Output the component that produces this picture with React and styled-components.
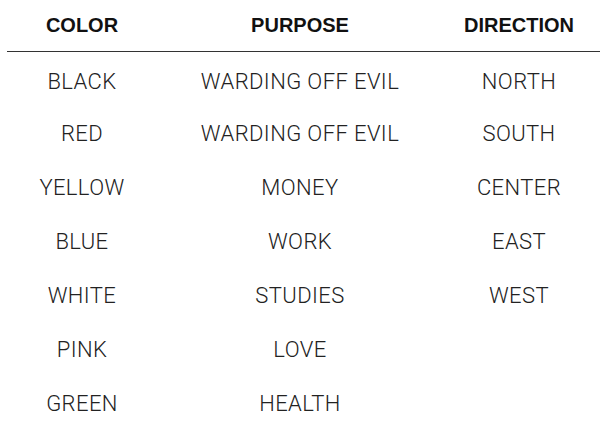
import React from 'react';
import styled, { createGlobalStyle } from 'styled-components';

const GlobalStyle = createGlobalStyle`
  body {
    margin: 0;
    background: #fff;
    font-family: Roboto, "Liberation Sans", sans-serif;
    color: #1a1a1a;
  }
`;

const rows = [
  ['BLACK', 'WARDING OFF EVIL', 'NORTH'],
  ['RED', 'WARDING OFF EVIL', 'SOUTH'],
  ['YELLOW', 'MONEY', 'CENTER'],
  ['BLUE', 'WORK', 'EAST'],
  ['WHITE', 'STUDIES', 'WEST'],
  ['PINK', 'LOVE', ''],
  ['GREEN', 'HEALTH', ''],
];

/* The whole table */
const Table = styled.div`
  display: grid;
  grid-template-columns: 150px 286px 157px;
  margin: 0 0 0 7px;
  width: 593px;
`;

/* Header cells, bold, underlined by one shared rule */
const HeadCell = styled.div`
  height: 52px;
  display: flex;
  align-items: center;
  justify-content: center;
  font-family: "Liberation Sans", Arial, sans-serif;
  font-size: 20px;
  font-weight: 700;
  color: #111;
  border-bottom: 1px solid #333;
  padding-right: ${(p) => (p.$last ? '5px' : '0')};
  box-sizing: border-box;
`;

/* Body cells, light weight */
const Cell = styled.div`
  height: 54px;
  display: flex;
  align-items: center;
  justify-content: center;
  font-size: 22px;
  font-weight: 300;
  letter-spacing: 0.4px;
  color: #222;
  padding-top: ${(p) => (p.$first ? '4px' : '0')};
  padding-right: ${(p) => (p.$last ? '5px' : '0')};
  box-sizing: border-box;
`;

const App = () => (
  <>
    <GlobalStyle />
    <Table>
      <HeadCell>COLOR</HeadCell>
      <HeadCell>PURPOSE</HeadCell>
      <HeadCell $last>DIRECTION</HeadCell>
      {rows.map((row, i) =>
        row.map((text, j) => (
          <Cell key={`${i}-${j}`} $first={i === 0} $last={j === 2}>
            {text}
          </Cell>
        ))
      )}
    </Table>
  </>
);

export default App;
